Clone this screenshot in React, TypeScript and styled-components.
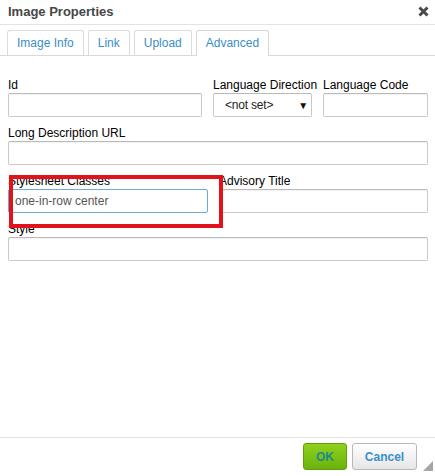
import React from "react";
import styled, { createGlobalStyle, css } from "styled-components";

const GlobalStyle = createGlobalStyle`
  html, body { margin: 0; padding: 0; background: #ffffff; }
  body { font-family: "Liberation Sans", Arial, sans-serif; }
  * { box-sizing: border-box; }
`;

const Dialog = styled.div`
  position: relative;
  width: 435px;
  height: 476px;
  background: #ffffff;
  display: flex;
  flex-direction: column;
  overflow: hidden;
`;

const TitleBar = styled.div`
  height: 25px;
  padding: 0 6px 0 8px;
  display: flex;
  align-items: center;
  justify-content: space-between;
  border-bottom: 1px solid #e3e3e3;
`;

const Title = styled.div`
  font-size: 13px;
  font-weight: bold;
  color: #474747;
  line-height: 22px;
`;

const CloseButton = styled.div`
  width: 11px;
  height: 11px;
  margin-top: -2px;
  display: flex;
  align-items: center;
  justify-content: center;
`;

const TabStrip = styled.div`
  display: flex;
  align-items: flex-end;
  gap: 4px;
  padding: 5px 0 0 7px;
  height: 31px;
  border-bottom: 1px solid #d9d9d9;
`;

const Tab = styled.div<{ $active?: boolean }>`
  height: 25px;
  padding: 0 9px;
  display: flex;
  align-items: center;
  font-size: 12px;
  color: #3b8dc8;
  background: #ffffff;
  border: 1px solid #dcdcdc;
  border-bottom: none;
  border-radius: 3px 3px 0 0;
  ${(p) =>
    p.$active &&
    css`
      height: 26px;
      margin-bottom: -1px;
      padding-bottom: 1px;
      border-color: #d6d6d6;
    `}
`;

const Body = styled.div`
  flex: 1;
  padding: 22px 7px 0 8px;
  display: flex;
  flex-direction: column;
  gap: 9px;
`;

const Row = styled.div<{ $cols: string }>`
  display: grid;
  grid-template-columns: ${(p) => p.$cols};
  column-gap: 11px;
`;

const Field = styled.div`
  display: flex;
  flex-direction: column;
  min-width: 0;
`;

const Label = styled.div`
  font-size: 12px;
  line-height: 14px;
  color: #000000;
  white-space: nowrap;
  margin-bottom: 1px;
`;

const TextInput = styled.div<{ $focused?: boolean }>`
  height: 24px;
  border: 1px solid #c9c9c9;
  border-top-color: #b9b9b9;
  border-radius: 2px;
  background: #ffffff;
  box-shadow: inset 0 1px 1px rgba(0, 0, 0, 0.05);
  padding: 0 6px;
  display: flex;
  align-items: center;
  font-size: 12px;
  color: #555555;
  ${(p) =>
    p.$focused &&
    css`
      border-color: #6aabdf;
      box-shadow: none;
    `}
`;

const Select = styled.div`
  height: 24px;
  border: 1px solid #c9c9c9;
  border-top-color: #b9b9b9;
  border-radius: 2px;
  background: #ffffff;
  padding: 0 3px 0 11px;
  display: flex;
  align-items: center;
  justify-content: space-between;
  font-size: 12px;
  letter-spacing: -0.2px;
  color: #222222;
`;

const Arrow = styled.span`
  font-size: 10px;
  color: #111111;
`;

const Footer = styled.div`
  height: 39px;
  border-top: 1px solid #e3e3e3;
  display: flex;
  justify-content: flex-end;
  align-items: flex-start;
  gap: 5px;
  padding: 5px 18px 0 0;
`;

const Button = styled.div`
  height: 27px;
  border-radius: 3px;
  display: flex;
  align-items: center;
  justify-content: center;
  font-size: 12px;
  font-weight: bold;
`;

const OkButton = styled(Button)`
  width: 44px;
  color: #1f8a8c;
  background: linear-gradient(#8fd01c, #6bb30c);
  border: 1px solid #5f9f0d;
`;

const CancelButton = styled(Button)`
  width: 65px;
  color: #3a8fcc;
  background: linear-gradient(#ffffff, #e6e6e6);
  border: 1px solid #b8b8b8;
`;

const Grip = styled.div`
  position: absolute;
  right: 2px;
  bottom: 5px;
  width: 0;
  height: 0;
  border-left: 10px solid transparent;
  border-bottom: 10px solid #a5a5a5;
`;

const Highlight = styled.div`
  position: absolute;
  left: 9px;
  top: 175px;
  width: 214px;
  height: 53px;
  border: 4px solid #e2121b;
  pointer-events: none;
`;

const tabs = ["Image Info", "Link", "Upload", "Advanced"];

export default function App() {
  return (
    <>
      <GlobalStyle />
      <Dialog>
        <TitleBar>
          <Title>Image Properties</Title>
          <CloseButton>
            <svg width="11" height="11" viewBox="0 0 11 11">
              <path d="M1.5 1.5 L9.5 9.5 M9.5 1.5 L1.5 9.5" stroke="#4a4a4a" strokeWidth="3" strokeLinecap="butt" />
            </svg>
          </CloseButton>
        </TitleBar>
        <TabStrip>
          {tabs.map((t) => (
            <Tab key={t} $active={t === "Advanced"}>
              {t}
            </Tab>
          ))}
        </TabStrip>
        <Body>
          <Row $cols="194px 99px 1fr">
            <Field>
              <Label>Id</Label>
              <TextInput />
            </Field>
            <Field>
              <Label>Language Direction</Label>
              <Select>
                <span>&lt;not set&gt;</span>
                <Arrow>▼</Arrow>
              </Select>
            </Field>
            <Field>
              <Label>Language Code</Label>
              <TextInput />
            </Field>
          </Row>
          <Row $cols="1fr">
            <Field>
              <Label>Long Description URL</Label>
              <TextInput />
            </Field>
          </Row>
          <Row $cols="200px 1fr">
            <Field>
              <Label>Stylesheet Classes</Label>
              <TextInput $focused>one-in-row center</TextInput>
            </Field>
            <Field>
              <Label>Advisory Title</Label>
              <TextInput />
            </Field>
          </Row>
          <Row $cols="1fr">
            <Field>
              <Label>Style</Label>
              <TextInput />
            </Field>
          </Row>
        </Body>
        <Footer>
          <OkButton>OK</OkButton>
          <CancelButton>Cancel</CancelButton>
        </Footer>
        <Grip />
        <Highlight />
      </Dialog>
    </>
  );
}
